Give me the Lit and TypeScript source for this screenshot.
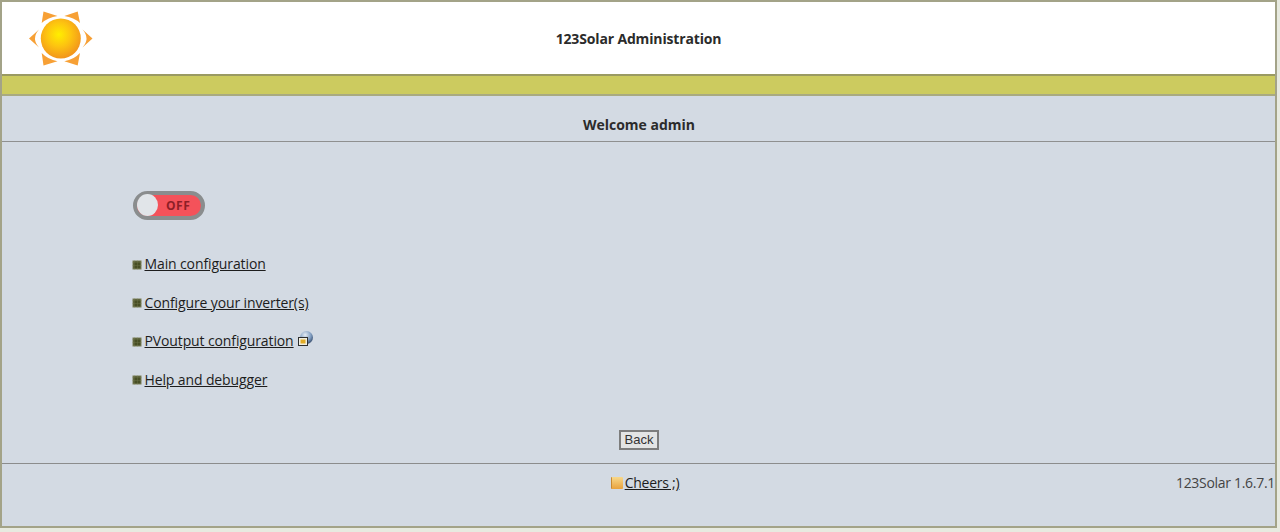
import { LitElement, html, css, svg } from "lit";
import { customElement } from "lit/decorators.js";

const bullet = svg`<svg class="bullet" width="10" height="10" viewBox="0 0 10 10"><rect x="0.5" y="0.5" width="9" height="9" fill="#7b7f5a"/><rect x="1.5" y="1.5" width="7" height="7" fill="#474e24"/><path d="M0 2.5h10M0 5.5h10M2.5 0v10M5.5 0v10" stroke="#8b8f66" stroke-width="0.5" opacity="0.5"/></svg>`;

@customElement("app-root")
export class AppRoot extends LitElement {
  static styles = css`
    :host { display: block; height: 532px; background: #e7eae0; font-family: "Open Sans", "Liberation Sans", sans-serif; color: #2b2b2b; overflow: hidden; }
    .frame { width: 1277px; height: 528px; box-sizing: border-box; border: 2px solid #a3a388; background: #d3dae3; display: flex; flex-direction: column; }
    .head { height: 72px; background: #fff; display: flex; align-items: center; justify-content: center; position: relative; flex: none; }
    .logo { position: absolute; left: 26px; top: 9px; }
    .title { font-weight: 700; font-size: 14px; line-height: 20px; letter-spacing: -0.15px; padding-top: 2px; color: #2b2b2b; }
    .band { height: 18px; background: #cccb5f; border-top: 2px solid #9a9a62; border-bottom: 2px solid #a9aa80; flex: none; }
    .welcome { height: 45px; flex: none; display: flex; align-items: flex-end; justify-content: center; font-weight: 700; font-size: 14px; line-height: 20px; border-bottom: 1px solid #8f9090; }
    .welcome span { padding: 0 0 6px 1px; }
    .body { flex: none; height: 322px; box-sizing: border-box; padding: 49px 0 0 131px; display: flex; flex-direction: column; border-bottom: 1px solid #8b8c8c; }
    .toggle { width: 72px; height: 29px; box-sizing: border-box; border: 4px solid #8a8d8e; border-radius: 15px; background: #f4525a; display: flex; align-items: center; position: relative; flex: none; }
    .knob { position: absolute; left: 0; top: -1px; width: 21px; height: 22px; border-radius: 50%; background: #e1e5e9; }
    .off { margin-left: 29px; font-size: 12px; font-weight: 700; color: #8e1f27; letter-spacing: 0.5px; line-height: 14px; }
    .menu { list-style: none; margin: 33px 0 0 -1px; padding: 0; display: flex; flex-direction: column; gap: 17.67px; }
    .menu li { display: flex; align-items: center; height: 21px; font-size: 14px; line-height: 21px; letter-spacing: -0.12px; }
    .bullet { margin: 2px 2.5px 0 0; flex: none; }
    a { color: #1d1d1d; text-decoration: underline; }
    .ext { margin-left: 4px; margin-top: -5px; flex: none; }
    .back-row { margin: 40px 0 0 -130px; display: flex; justify-content: center; }
    button { width: 40px; height: 20px; padding: 0; box-sizing: border-box; background: #e3e4e4; border: 2px solid #7d7d7d; font: 13px "Liberation Sans", Arial, sans-serif; color: #333; line-height: 16px; }
    .foot { flex: 1; display: grid; grid-template-columns: 1fr auto 1fr; padding-top: 9px; font-size: 14px; line-height: 20px; }
    .cheers { grid-column: 2; display: flex; align-items: center; height: 20px; padding-left: 13px; letter-spacing: -0.25px; }
    .mug { width: 12px; height: 12px; border-radius: 1px; background: linear-gradient(#f8d88a, #e9a23c); border-left: 1px solid #c98a30; margin-right: 2px; box-sizing: border-box; }
    .ver { grid-column: 3; text-align: right; font-size: 14px; letter-spacing: -0.3px; color: #444; }
  `;

  render() {
    return html`<div class="frame">
      <div class="head">
        <svg class="logo" width="66" height="58" viewBox="28 11 66 58">
          <defs>
            <radialGradient id="s" cx="45%" cy="40%" r="60%">
              <stop offset="0" stop-color="#ffee00" />
              <stop offset="0.5" stop-color="#fdc410" />
              <stop offset="1" stop-color="#f2951c" />
            </radialGradient>
          </defs>
          <circle cx="60.8" cy="38.5" r="20" fill="url(#s)" />
          <g fill="#f7a035">
            <path d="M29 38.5 L39 29.5 Q31 38.5 39 47.5 Z" />
            <path d="M92.5 38.5 L82.5 29.5 Q90.5 38.5 82.5 47.5 Z" />
            <path d="M43.5 11.5 L57.5 16 Q48 17.5 41.7 23 Z" />
            <path d="M77.7 11.5 L64.3 16 Q74 17.5 80 23 Z" />
            <path d="M41.7 53 Q48 59.5 57.5 61.3 L43.5 65.5 Z" />
            <path d="M80 53 Q74 59.5 64.3 61.3 L77.7 65.5 Z" />
          </g>
        </svg>
        <div class="title">123Solar Administration</div>
      </div>
      <div class="band"></div>
      <div class="welcome"><span>Welcome admin</span></div>
      <div class="body">
        <div class="toggle"><span class="knob"></span><span class="off">OFF</span></div>
        <ul class="menu">
          <li>${bullet}<a href="#">Main configuration</a></li>
          <li>${bullet}<a href="#">Configure your inverter(s)</a></li>
          <li>${bullet}<a href="#">PVoutput configuration</a>
            <svg class="ext" width="16" height="15" viewBox="0 0 16 15">
              <defs>
                <radialGradient id="g" cx="40%" cy="30%" r="75%">
                  <stop offset="0" stop-color="#e6edf5" />
                  <stop offset="0.6" stop-color="#7f9cc0" />
                  <stop offset="1" stop-color="#2d4263" />
                </radialGradient>
              </defs>
              <circle cx="8.5" cy="6.5" r="6.5" fill="url(#g)" />
              <rect x="0.5" y="6.5" width="9" height="8" fill="#f0eee0" stroke="#2f2f2f" stroke-width="1" />
              <rect x="2.5" y="8.5" width="5" height="4" fill="#e2ab25" />
            </svg>
          </li>
          <li>${bullet}<a href="#">Help and debugger</a></li>
        </ul>
        <div class="back-row"><button>Back</button></div>
      </div>
      <div class="foot">
        <div class="cheers"><span class="mug"></span><a href="#">Cheers ;)</a></div>
        <div class="ver">123Solar 1.6.7.1</div>
      </div>
    </div>`;
  }
}
